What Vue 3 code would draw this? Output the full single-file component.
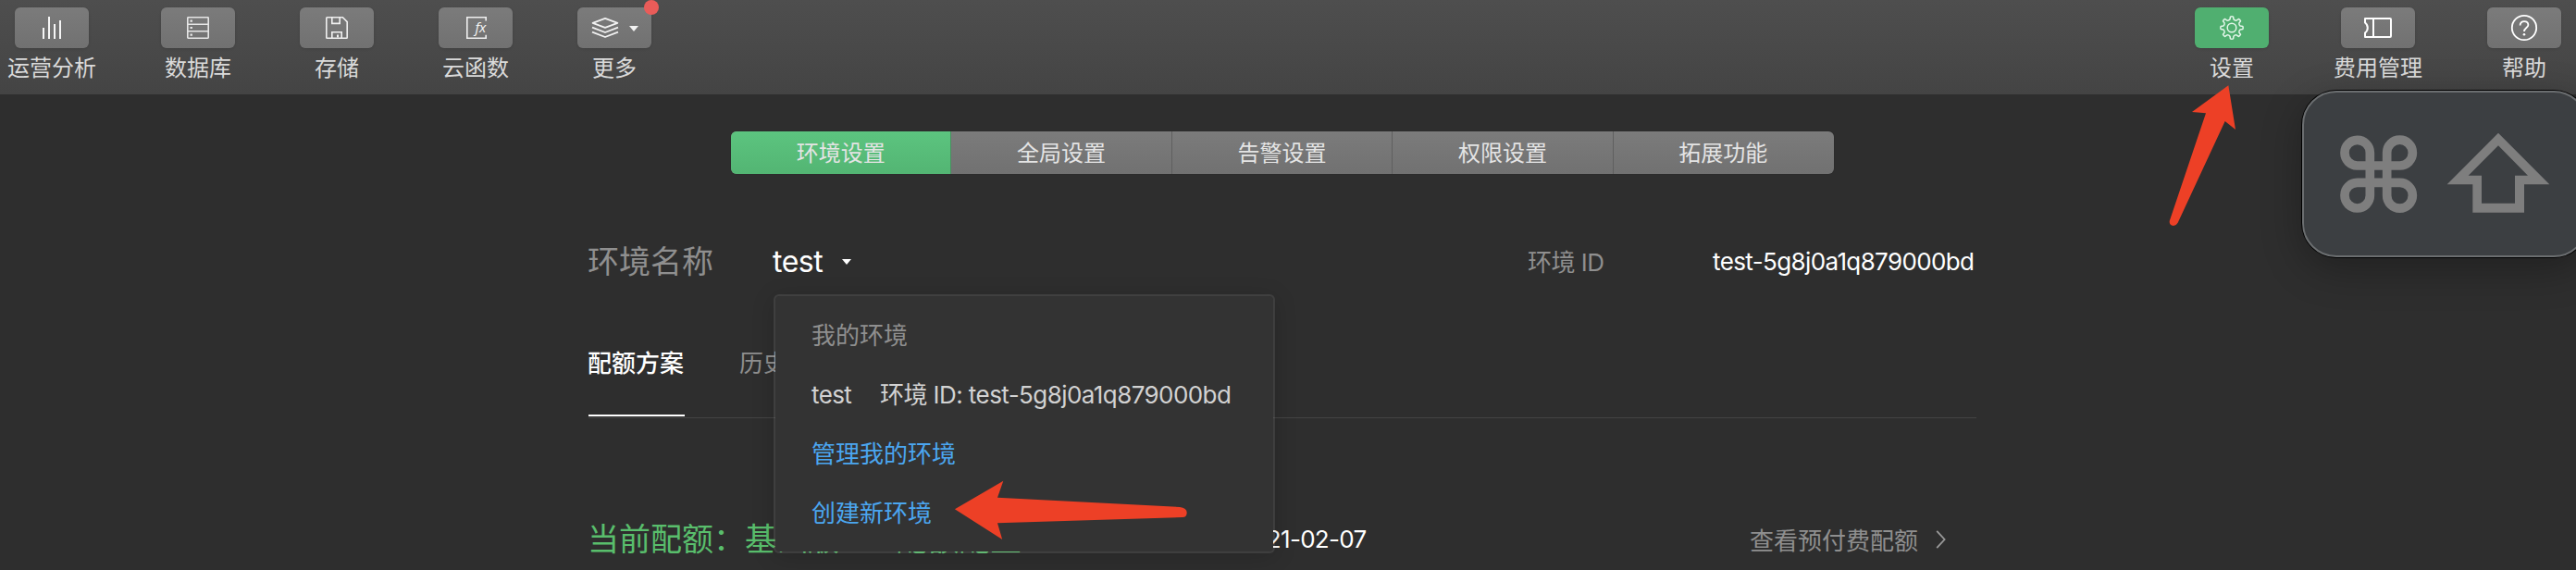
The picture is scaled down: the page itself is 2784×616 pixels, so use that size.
<script setup>
const leftTools = [
  { id: 'stats', label: '运营分析' },
  { id: 'db', label: '数据库' },
  { id: 'disk', label: '存储' },
  { id: 'fn', label: '云函数' },
  { id: 'more', label: '更多' },
]
const rightTools = [
  { id: 'gear', label: '设置', active: true },
  { id: 'ticket', label: '费用管理' },
  { id: 'help', label: '帮助' },
]
const tabs = ['环境设置', '全局设置', '告警设置', '权限设置', '拓展功能']

// Eight-tooth cog outline centred on (14, 14).
const gearPath = (() => {
  const n = 8
  const pts = []
  const at = (r, deg) => {
    const a = (deg * Math.PI) / 180
    return `${(14 + r * Math.sin(a)).toFixed(2)} ${(14 - r * Math.cos(a)).toFixed(2)}`
  }
  for (let i = 0; i < n; i++) {
    const c = (i * 360) / n
    pts.push(`${i ? 'L' : 'M'}${at(9.4, c - 12)}`)
    pts.push(`L${at(12, c - 7.5)}`)
    pts.push(`Q${at(12.5, c)} ${at(12, c + 7.5)}`)
    pts.push(`L${at(9.4, c + 12)}`)
    pts.push(`Q${at(8.2, c + 22.5)} ${at(9.4, c + 33)}`)
  }
  return pts.join(' ') + 'Z'
})()
</script>

<template>
  <div class="page">
    <header class="toolbar">
      <nav v-for="(group, g) in [leftTools, rightTools]" :key="g" class="group">
        <div v-for="t in group" :key="t.id" class="tool">
          <div class="btn" :class="{ active: t.active }">
            <svg v-if="t.id === 'stats'" width="80" height="44" fill="#f5f5f5">
              <rect x="30" y="22" width="2" height="12" />
              <rect x="36" y="10" width="2" height="24" />
              <rect x="42" y="18" width="2" height="16" />
              <rect x="48" y="14" width="2" height="20" />
            </svg>
            <svg v-else-if="t.id === 'db'" width="80" height="44" fill="none" stroke="#e6e6e6" stroke-width="1.6">
              <rect x="28.8" y="10.8" width="22.4" height="22.4" rx="0.6" />
              <path d="M29 18.2H51M29 25.8H51" />
              <path d="M31.5 14.6h2.4M31.5 22h2.4M31.5 29.6h2.4" stroke-width="2.2" />
            </svg>
            <svg v-else-if="t.id === 'disk'" width="80" height="44" fill="none" stroke="#f0f0f0" stroke-width="1.6">
              <path d="M29.5 10.8H46.4L51.2 15.6V32.5Q51.2 33.2 50.5 33.2H29.5Q28.8 33.2 28.8 32.5V11.5Q28.8 10.8 29.5 10.8Z" />
              <path d="M34.8 11V17.4H43.2V11" />
              <path d="M34.8 33V26.8H45.2V33" />
              <path d="M41 29.6v3" stroke-width="2" />
            </svg>
            <svg v-else-if="t.id === 'fn'" width="80" height="44">
              <path d="M51.2 14.4V10.8H30.8V33.2H51.2V29.8" fill="none" stroke="#f0f0f0" stroke-width="1.6" />
              <text x="39.4" y="27" class="fx" textLength="12" lengthAdjust="spacingAndGlyphs">fx</text>
            </svg>
            <svg v-else-if="t.id === 'more'" width="80" height="44" fill="none" stroke="#f2f2f2" stroke-width="1.8" stroke-linejoin="round">
              <path d="M30 11.8L43.4 16.8L30 21.8L16.6 16.8Z" />
              <path d="M16 21.6L30 27L44 21.6M16 26.6L30 32L44 26.6" />
              <path d="M56 20H66L61 26Z" fill="#f2f2f2" stroke="none" />
            </svg>
            <svg v-else-if="t.id === 'gear'" width="80" height="44" fill="none" stroke="#e4f6ea" stroke-width="1.5" stroke-linejoin="round">
              <g transform="translate(26 8)">
                <path :d="gearPath" />
                <circle cx="14" cy="14" r="4.8" />
              </g>
            </svg>
            <svg v-else-if="t.id === 'ticket'" width="80" height="44" fill="none" stroke="#fff" stroke-width="2" stroke-linejoin="round">
              <path d="M26 12H53Q54 12 54 13V31Q54 32 53 32H26V27.5Q28.8 25.5 28.8 22T26 16.5Z" />
              <path d="M35 12V32" />
            </svg>
            <svg v-else width="80" height="44" fill="none" stroke="#fff" stroke-width="1.8">
              <circle cx="40" cy="22" r="13.2" />
              <path d="M35.6 19.4C35.6 16.6 37.4 15.2 40 15.2S44.4 16.8 44.4 19C44.4 22 40 22.2 40 26" />
              <circle cx="40" cy="29.2" r="1.3" fill="#fff" stroke="none" />
            </svg>
            <i v-if="t.id === 'more'" class="dot"></i>
          </div>
          <span class="label">{{ t.label }}</span>
        </div>
      </nav>
    </header>

    <main class="content">
      <div class="segments">
        <div v-for="(t, i) in tabs" :key="t" class="segment" :class="{ on: i === 0 }">{{ t }}</div>
      </div>

      <section class="env-row">
        <span class="env-title">环境名称</span>
        <div class="picker">
          <span class="picker-name">test</span>
          <svg class="caret" width="10" height="6"><path d="M0 0H10L5 6Z" fill="#fff" /></svg>
          <div class="menu">
            <div class="item muted">我的环境</div>
            <div class="item"><span class="m-name">test</span><span class="m-id">环境 ID: test-5g8j0a1q879000bd</span></div>
            <div class="item link">管理我的环境</div>
            <div class="item link">创建新环境</div>
          </div>
        </div>
        <span class="id-label">环境 ID</span>
        <span class="id-value">test-5g8j0a1q879000bd</span>
      </section>

      <section class="subtabs">
        <span class="subtab current">配额方案</span>
        <span class="subtab">历史</span>
      </section>

      <section class="quota">
        <span class="plan"><span>当前配额：基础版</span><span class="plan-note">配额配置</span></span>
        <span class="date">2021-02-07</span>
        <span class="more-link">查看预付费配额</span>
        <svg class="chev" width="12" height="20" fill="none" stroke="#999" stroke-width="1.8"><path d="M1.2 0.8L9.6 10L1.2 19.2" /></svg>
      </section>
    </main>

    <div class="keys">
      <svg class="key-icons" width="280" height="100" viewBox="0 0 840 300">
        <path fill="none" stroke="#7e7e7e" stroke-width="29" d="M97 138H56A41 41 0 0 1 15 97V96A41 41 0 0 1 97 96V235A41 41 0 0 1 15 235V234A41 41 0 0 1 56 193H194A41 41 0 0 1 235 234V235A41 41 0 0 1 152 235V96A41 41 0 0 1 235 96V97A41 41 0 0 1 194 138Z" />
        <path fill="#7e7e7e" fill-rule="evenodd" d="M513 32L679 199H597V290H430V199H347ZM513 73L416 170H459V260H567V170H609Z" />
      </svg>
    </div>

    <svg class="arrow up" width="80" height="160" viewBox="0 0 240 480">
      <path fill="#ed4026" d="M196 7L219 150L185 123L32 452Q26 462 18 462Q4 461 5 447L123 97L78 93Z" />
    </svg>
    <svg class="arrow left" width="254" height="66">
      <path fill="#ed4026" d="M1.9 32.3L54.3 1.7L48 19.7L245 30Q252.7 31 252.7 36Q252.7 41 248 41L48 47.3L53.2 65Z" />
    </svg>
  </div>
</template>

<style>
body {
  margin: 0;
  background: #2e2e2e;
}
</style>

<style scoped>
.page {
  position: relative;
  width: 2784px;
  height: 616px;
  overflow: hidden;
  background: #2e2e2e;
  color: #fff;
  font-family: Inter, "Noto Sans CJK SC", sans-serif;
  font-size: 26px;
  white-space: nowrap;
}
.toolbar {
  display: flex;
  justify-content: space-between;
  box-sizing: border-box;
  height: 102px;
  padding: 8px 16px 0 8px;
  background: linear-gradient(#4e4e4e, #444);
}
.group {
  display: flex;
  gap: 70px;
}
.tool {
  display: flex;
  flex-direction: column;
  align-items: center;
}
.btn {
  position: relative;
  width: 80px;
  height: 44px;
  border-radius: 6px;
  background: linear-gradient(#7b7b7b, #717171);
  box-shadow: 0 1px 3px rgba(0, 0, 0, 0.12);
}
.btn.active {
  background: #50af70;
}
.btn svg {
  display: block;
}
.fx {
  font: italic 500 15px "Open Sans", sans-serif;
  fill: #f5f5f5;
}
.dot {
  position: absolute;
  top: -8px;
  right: -8px;
  width: 16px;
  height: 16px;
  border-radius: 50%;
  background: #e95c59;
}
.label {
  margin-top: 4px;
  font-size: 24px;
  line-height: 36px;
  color: #dadada;
}
.content {
  display: flex;
  flex-direction: column;
  width: 1500px;
  margin-left: 636px;
}
.segments {
  display: flex;
  width: 1192px;
  height: 46px;
  margin: 40px 0 0 154px;
  border-radius: 6px;
  overflow: hidden;
  background: linear-gradient(#7b7b7b, #717171);
  box-shadow: 0 0 1px rgba(0, 0, 0, 0.3);
}
.segment {
  flex: 1 1 0;
  width: 0;
  box-sizing: border-box;
  border-right: 1px solid #5f5f5f;
  text-align: center;
  font-size: 24px;
  line-height: 48px;
  color: #e4e4e4;
}
.segment.on {
  background: linear-gradient(#5cc47f, #53b573);
  border-right-color: #4a8f61;
}
.segment:last-child {
  border-right-color: transparent;
}
.env-row {
  display: flex;
  align-items: center;
  height: 60px;
  margin-top: 64px;
}
.env-title {
  width: 201px;
  margin-left: -1px;
  padding-bottom: 3px;
  font-size: 34px;
  color: #8f8f8f;
}
.picker {
  position: relative;
  display: flex;
  align-items: center;
  width: 816px;
  height: 60px;
}
.picker-name {
  width: 75px;
  margin-left: -1px;
  font-size: 32px;
  letter-spacing: -0.5px;
}
.caret {
  margin-top: 2px;
}
.menu {
  position: absolute;
  z-index: 2;
  left: 0;
  top: 66px;
  box-sizing: border-box;
  width: 542px;
  height: 280px;
  padding: 11px 39px;
  border: 2px solid rgba(255, 255, 255, 0.09);
  border-radius: 6px;
  background: #333;
  background-clip: padding-box;
  box-shadow: 0 4px 24px rgba(0, 0, 0, 0.16);
}
.item {
  display: flex;
  line-height: 64px;
  color: #d2d2d2;
}
.muted {
  color: #8f8f8f;
}
.link {
  color: #4ba6f0;
}
.m-name {
  width: 74px;
  letter-spacing: -0.6px;
}
.m-id {
  letter-spacing: -0.57px;
}
.id-label {
  width: 200px;
  margin-left: -1px;
  padding-bottom: 1px;
  letter-spacing: -0.5px;
  color: #8f8f8f;
}
.id-value {
  letter-spacing: -0.62px;
}
.subtabs {
  display: flex;
  gap: 60px;
  box-sizing: border-box;
  height: 100px;
  margin-top: 40px;
  border-bottom: 1px solid #444;
}
.subtab {
  box-sizing: border-box;
  height: 98px;
  line-height: 82px;
  text-indent: -1px;
  color: #8f8f8f;
}
.subtab.current {
  width: 104px;
  border-bottom: 2px solid #fff;
  font-weight: 500;
  color: #fff;
}
.quota {
  display: flex;
  align-items: center;
  height: 60px;
  margin-top: 101px;
}
.plan {
  display: flex;
  gap: 62px;
  width: 702px;
  padding-bottom: 6px;
  text-indent: -1px;
  font-size: 34px;
  color: #59be6c;
}
.date {
  width: 553px;
  padding-bottom: 1px;
  letter-spacing: -0.7px;
}
.more-link {
  width: 201px;
  padding-bottom: 2px;
  color: #8f8f8f;
}
.keys {
  position: absolute;
  z-index: 3;
  left: 2488px;
  top: 98px;
  box-sizing: border-box;
  width: 309px;
  height: 180px;
  border: 2px solid #6b6e70;
  border-radius: 37px;
  background: #3c3f42;
  box-shadow: 0 0 0 1px #000, 0 12px 44px rgba(0, 0, 0, 0.3);
}
.key-icons {
  display: block;
  margin: 33px 0 0 38.5px;
}
.arrow {
  position: absolute;
  z-index: 4;
}
.arrow.up {
  left: 2343px;
  top: 90px;
}
.arrow.left {
  left: 1030px;
  top: 518px;
}
</style>
